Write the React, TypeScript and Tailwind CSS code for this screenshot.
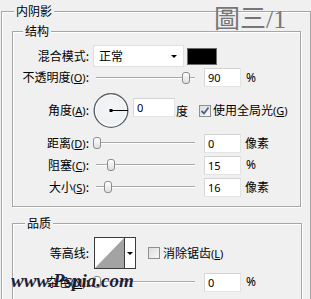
const sliders = {
  opacity: 186,
  distance: 97,
  choke: 111,
  size: 108,
  noise: 97,
};

function Key({ k }: { k: string }) {
  return (
    <span className="font-['Noto_Sans',sans-serif] text-[11px]">
      (<span className="underline underline-offset-1">{k}</span>)
    </span>
  );
}

function Label({ text, k }: { text: string; k?: string }) {
  return (
    <div className="w-[76px] shrink-0 text-right whitespace-nowrap">
      {text}
      {k && <Key k={k} />}:
    </div>
  );
}

function NumBox({ value, w = "w-[37px]" }: { value: string; w?: string }) {
  return (
    <div
      className={`${w} h-[19px] shrink-0 bg-white border border-[#e4e4e4] border-t-[#d2d2d2] border-l-[#d8d8d8] pl-[3px] text-[11px] leading-[17px] font-['Noto_Sans',sans-serif]`}
    >
      {value}
    </div>
  );
}

function Slider({ at }: { at: number }) {
  // at = page x of the thumb's centre, track runs 96..195
  return (
    <div className="relative w-[104px] h-[16px] shrink-0 flex items-center">
      <div className="ml-[3px] w-[99px] h-[2px] border-t border-[#a9a9a9] border-b border-b-white" />
      <div
        className="absolute top-[2px] w-[8px] h-[12px] rounded-[3px] border border-[#8c8c8c] bg-gradient-to-b from-white to-[#dedede]"
        style={{ left: at - 93 - 4 }}
      />
    </div>
  );
}

function SliderRow({ text, k, at, value, unit }: { text: string; k: string; at: number; value: string; unit: string }) {
  return (
    <div className="flex items-center h-[22px]">
      <Label text={text} k={k} />
      <div className="ml-[4px]">
        <Slider at={at} />
      </div>
      <div className="ml-[7px]">
        <NumBox value={value} />
      </div>
      <div className={unit === "%" ? "ml-[5px] font-['Noto_Sans',sans-serif] text-[12px]" : "ml-[4px]"}>{unit}</div>
    </div>
  );
}

function Check({ on }: { on?: boolean }) {
  return (
    <div className="w-[12px] h-[12px] shrink-0 border border-[#8e8f8f] bg-gradient-to-br from-[#dcdcdc] to-[#f8f8f8] flex items-center justify-center">
      {on && (
        <svg width="10" height="10" viewBox="0 0 10 10">
          <path d="M1.5 5 L4 7.5 L8.5 1.5" fill="none" stroke="#4a5f8a" strokeWidth="1.8" />
        </svg>
      )}
    </div>
  );
}

function Dial() {
  return (
    <svg width="36" height="37" viewBox="0 0 36 37" className="shrink-0">
      <defs>
        <radialGradient id="dialFill" cx="50%" cy="45%" r="55%">
          <stop offset="0" stopColor="#f6f6f6" />
          <stop offset="0.8" stopColor="#eef0f2" />
          <stop offset="1" stopColor="#ffffff" />
        </radialGradient>
      </defs>
      <circle cx="18" cy="18.5" r="16.8" fill="url(#dialFill)" stroke="#56616c" strokeWidth="1.4" />
      <circle cx="18" cy="18.5" r="15.6" fill="none" stroke="#ffffff" strokeWidth="0.8" />
      <line x1="18" y1="18.5" x2="35" y2="18.5" stroke="#000" strokeWidth="1" />
      <rect x="16.5" y="17" width="3" height="3" fill="#000" />
    </svg>
  );
}

function Contour() {
  return (
    <div className="w-[42px] h-[32px] shrink-0 border border-[#3c3c3c] bg-white flex">
      <svg width="29" height="30" viewBox="0 0 29 30">
        <polygon points="0,30 29,0 29,30" fill="#a3a3a3" />
      </svg>
      <div className="flex-1 border-l border-[#3c3c3c] flex items-center justify-center">
        <div className="w-0 h-0 border-l-[3px] border-r-[3px] border-t-[3px] border-l-transparent border-r-transparent border-t-black" />
      </div>
    </div>
  );
}

export default function App() {
  return (
    <div className="relative w-[311px] h-[299px] overflow-hidden bg-[#f0f0f0] pt-[4px] text-[12px] leading-[16px] text-black font-['Noto_Sans_CJK_SC','Noto_Sans',sans-serif]">
      <fieldset className="ml-[1px] w-[310px] min-w-0 border border-[#a6a6a6] shadow-[inset_1px_1px_0_#fff] pb-[10px]">
        <legend className="ml-[12px] px-[2px] leading-[14px] bg-[#f0f0f0]">内阴影</legend>

        <fieldset className="ml-[10px] mt-[6px] w-[289px] min-w-0 border border-[#a6a6a6] shadow-[inset_1px_1px_0_#fff,1px_1px_0_#fff] pb-[8px]">
          <legend className="ml-[10px] px-[2px] leading-[14px] bg-[#f0f0f0]">结构</legend>

          <div className="mt-[7px] flex items-center h-[22px]">
            <Label text="混合模式" />
            <div className="ml-[4px] w-[91px] h-[22px] bg-white border border-[#e0e0e0] flex items-center pl-[5px] pr-[6px]">
              <span className="flex-1">正常</span>
              <div className="w-0 h-0 border-l-[3px] border-r-[3px] border-t-[3px] border-l-transparent border-r-transparent border-t-black" />
            </div>
            <div className="ml-[3px] w-[30px] h-[17px] bg-black border border-[#6b6b6b]" />
          </div>

          <div className="mt-[1px] flex items-center h-[19px]">
            <Label text="不透明度" k="O" />
            <div className="ml-[4px]">
              <Slider at={sliders.opacity} />
            </div>
            <div className="ml-[7px]">
              <NumBox value="90" />
            </div>
            <div className="ml-[5px] font-['Noto_Sans',sans-serif]">%</div>
          </div>

          <div className="mt-[5px] flex items-center h-[37px]">
            <Label text="角度" k="A" />
            <div className="ml-[4px]">
              <Dial />
            </div>
            <div className="ml-[4px] mb-[6px]">
              <NumBox value="0" w="w-[42px]" />
            </div>
            <div className="ml-[1px]">度</div>
            <div className="ml-[11px]">
              <Check on />
            </div>
            <div className="ml-[2px] whitespace-nowrap">
              使用全局光
              <Key k="G" />
            </div>
          </div>

          <div className="mt-[3px]">
            <SliderRow text="距离" k="D" at={sliders.distance} value="0" unit="像素" />
            <SliderRow text="阻塞" k="C" at={sliders.choke} value="15" unit="%" />
            <SliderRow text="大小" k="S" at={sliders.size} value="16" unit="像素" />
          </div>
        </fieldset>

        <fieldset className="ml-[10px] mt-[9px] w-[290px] min-w-0 border border-[#a6a6a6] shadow-[inset_1px_1px_0_#fff,1px_1px_0_#fff] pb-[8px]">
          <legend className="ml-[12px] px-[2px] leading-[14px] bg-[#f0f0f0]">品质</legend>

          <div className="mt-[7px] flex items-center h-[32px]">
            <Label text="等高线" />
            <div className="ml-[5px]">
              <Contour />
            </div>
            <div className="ml-[12px]">
              <Check />
            </div>
            <div className="ml-[3px] whitespace-nowrap">
              消除锯齿
              <Key k="L" />
            </div>
          </div>

          <div className="mt-[2px]">
            <SliderRow text="杂色" k="N" at={sliders.noise} value="0" unit="%" />
          </div>
        </fieldset>
      </fieldset>

      {/* watermarks laid over the dialog */}
      <div className="absolute left-[214px] top-[5px] text-[26px] leading-[30px] text-[#767676] font-['Liberation_Serif','Noto_Sans_CJK_TC',serif] whitespace-nowrap">
        圖三/1
      </div>
      <div className="absolute left-[11px] top-[269px] text-[19px] leading-[24px] italic font-bold text-[#1e1e38] font-['Liberation_Serif',serif] whitespace-nowrap">
        www.Pspia.com
      </div>
    </div>
  );
}
